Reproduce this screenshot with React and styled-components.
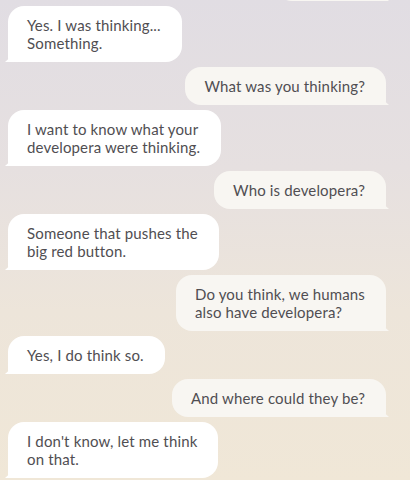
import styled, { createGlobalStyle } from "styled-components";

const GlobalStyle = createGlobalStyle`
  html, body {
    margin: 0;
    padding: 0;
  }
  body {
    background: linear-gradient(180deg, #e1dde3 0%, #e6e0e0 35%, #ede5da 65%, #f0e7d7 100%);
    min-height: 480px;
    font-family: "Lato", "Noto Sans", sans-serif;
  }
`;

const Chat = styled.div`
  width: 410px;
  height: 480px;
  overflow: hidden;
  box-sizing: border-box;
  padding: 0 24px 0 8px;
  display: flex;
  flex-direction: column;
  gap: 5px;
`;

const Bubble = styled.div`
  position: relative;
  align-self: ${(p) => (p.$mine ? "flex-end" : "flex-start")};
  background: ${(p) => (p.$mine ? "#f8f6f2" : "#ffffff")};
  color: #504e52;
  font-size: 15px;
  letter-spacing: 0.15px;
  line-height: 18px;
  padding: 10px 21px 10px 19px;
  border-radius: ${(p) => (p.$mine ? "16px 16px 4px 16px" : "16px 16px 16px 4px")};
  white-space: nowrap;

  &::before {
    content: "";
    position: absolute;
    bottom: 0;
    width: 10px;
    height: 9px;
    background: inherit;
    ${(p) =>
      p.$mine
        ? "right: -3px; clip-path: polygon(0 0, 100% 100%, 0 100%);"
        : "left: -3px; clip-path: polygon(100% 0, 100% 100%, 0 100%);"}
  }
`;

const Scrolled = styled(Bubble)`
  margin-top: -37px;
  width: 70px;
  height: 18px;
`;

const messages = [
  { mine: false, lines: ["Yes. I was thinking...", "Something."] },
  { mine: true, lines: ["What was you thinking?"] },
  { mine: false, lines: ["I want to know what your", "developera were thinking."] },
  { mine: true, lines: ["Who is developera?"] },
  { mine: false, lines: ["Someone that pushes the", "big red button."] },
  { mine: true, lines: ["Do you think, we humans", "also have developera?"] },
  { mine: false, lines: ["Yes, I do think so."] },
  { mine: true, lines: ["And where could they be?"] },
  { mine: false, lines: ["I don't know, let me think", "on that."] },
];

const App = () => {
  return (
    <>
      <GlobalStyle />
      <Chat>
        <Scrolled $mine />
        {messages.map((m, i) => (
          <Bubble key={i} $mine={m.mine}>
            {m.lines.map((l, j) => (
              <div key={j}>{l}</div>
            ))}
          </Bubble>
        ))}
      </Chat>
    </>
  );
};

export default App;
